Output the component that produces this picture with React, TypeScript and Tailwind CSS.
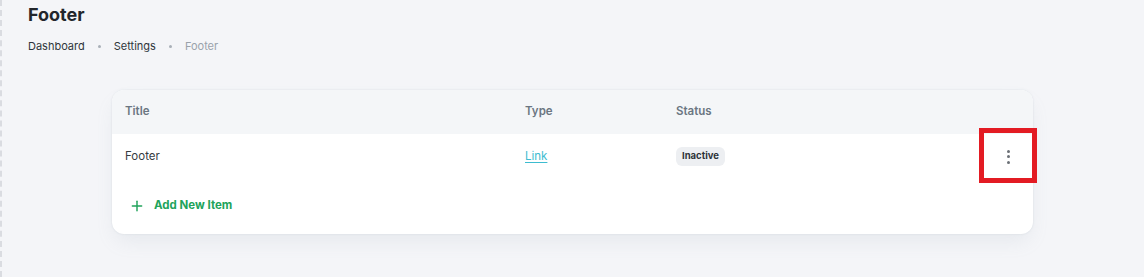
import { Plus } from 'lucide-react';

type FooterItem = {
  id: string;
  title: string;
  type: string;
  status: string;
};

const items: readonly FooterItem[] = [{ id: 'footer', title: 'Footer', type: 'Link', status: 'Inactive' }];

const font = { fontFamily: 'Inter, "Noto Sans", sans-serif' };

export default function App() {
  return (
    <div className="min-h-[277px] w-full bg-[#f4f5f8] border-l-2 border-dashed border-[#dadce1] text-[#212b36]" style={font}>
      <div className="pt-[3px] pl-[26px]">
        <h1 className="text-[18px] leading-6 font-bold text-[#22262b]">Footer</h1>
        <nav className="mt-[10px] flex items-center text-[11px] leading-[18px]">
          <span className="text-[#2f353b]">Dashboard</span>
          <span className="mx-[13px] h-[3px] w-[3px] rounded-full bg-[#a9b0b8]" />
          <span className="text-[#2f353b]">Settings</span>
          <span className="mx-[13px] h-[3px] w-[3px] rounded-full bg-[#a9b0b8]" />
          <span className="text-[#9aa2ab]">Footer</span>
        </nav>
      </div>

      <div className="mt-[35px] pl-[110px] pr-[111px]">
        <section className="relative rounded-xl bg-white shadow-[0_0_2px_0_rgba(145,158,171,0.25),0_10px_20px_-4px_rgba(145,158,171,0.14)]">
          {/* Cabeçalho */}
          <div className="grid h-[44px] grid-cols-[400px_151px_1fr] items-center rounded-t-xl bg-[#f4f6f8] px-[13px] text-[11.5px] font-semibold text-[#6b7682]">
            <span>Title</span>
            <span>Type</span>
            <span>Status</span>
          </div>

          {/* Linhas */}
          {items.map((item) => (
            <div key={item.id} className="grid h-[45px] grid-cols-[400px_151px_1fr_auto] items-center px-[13px] text-[11.5px]">
              <span className="text-[#363b41]">{item.title}</span>
              <span>
                <a href="#" className="text-[#3dbcd0] underline underline-offset-2">
                  {item.type}
                </a>
              </span>
              <span>
                <span className="inline-flex h-[19px] items-center rounded-[6px] bg-[#edeff2] px-[6px] text-[9.5px] font-bold text-[#2d3238]">
                  {item.status}
                </span>
              </span>
              <span className="relative flex h-[24px] w-[24px] items-center justify-center">
                <span className="flex flex-col items-center gap-[2.5px]">
                  <span className="h-[3px] w-[3px] rounded-full bg-[#6b7076]" />
                  <span className="h-[3px] w-[3px] rounded-full bg-[#6b7076]" />
                  <span className="h-[3px] w-[3px] rounded-full bg-[#6b7076]" />
                </span>
                <span className="absolute left-[-17px] top-[-17px] h-[55px] w-[58px] border-[5px] border-[#e31b23]" />
              </span>
            </div>
          ))}

          <div className="flex h-[55px] items-center px-[17px] pb-[1px]">
            <button type="button" className="flex items-center gap-[9px] text-[11.5px] font-bold text-[#21a35b]">
              <Plus size={16} strokeWidth={2.2} />
              Add New Item
            </button>
          </div>
        </section>
      </div>
    </div>
  );
}
